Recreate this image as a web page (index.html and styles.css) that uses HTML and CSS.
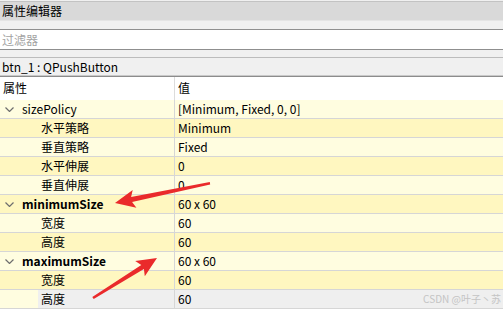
FILE: index.html
```html
<!DOCTYPE html>
<html lang="zh-CN">
<head>
    <meta charset="UTF-8">
    <meta name="viewport" content="width=device-width, initial-scale=1.0">
    <title>属性编辑器</title>
    <link rel="stylesheet" href="styles.css">
</head>
<body>

<div class="editor">
    <div class="titlebar">属性编辑器</div>

    <div class="filter">
        <input type="text" placeholder="过滤器">
    </div>

    <div class="objname">btn_1 : QPushButton</div>

    <div class="tree">
        <div class="row head">
            <div class="name">属性</div>
            <div class="value">值</div>
        </div>

        <div class="row light">
            <div class="name group">
                <svg class="chevron" width="9" height="5" viewBox="0 0 9 5"><polyline points="0.5,0.5 4.5,4.5 8.5,0.5" /></svg>
                sizePolicy
            </div>
            <div class="value">[Minimum, Fixed, 0, 0]</div>
        </div>
        <div class="row dark">
            <div class="name child">水平策略</div>
            <div class="value">Minimum</div>
        </div>
        <div class="row light">
            <div class="name child">垂直策略</div>
            <div class="value">Fixed</div>
        </div>
        <div class="row dark">
            <div class="name child">水平伸展</div>
            <div class="value">0</div>
        </div>
        <div class="row light">
            <div class="name child">垂直伸展</div>
            <div class="value">0</div>
        </div>

        <div class="row dark">
            <div class="name group bold">
                <svg class="chevron" width="9" height="5" viewBox="0 0 9 5"><polyline points="0.5,0.5 4.5,4.5 8.5,0.5" /></svg>
                minimumSize
            </div>
            <div class="value">60 x 60</div>
        </div>
        <div class="row light">
            <div class="name child">宽度</div>
            <div class="value">60</div>
        </div>
        <div class="row dark">
            <div class="name child">高度</div>
            <div class="value">60</div>
        </div>

        <div class="row light">
            <div class="name group bold">
                <svg class="chevron" width="9" height="5" viewBox="0 0 9 5"><polyline points="0.5,0.5 4.5,4.5 8.5,0.5" /></svg>
                maximumSize
            </div>
            <div class="value">60 x 60</div>
        </div>
        <div class="row dark">
            <div class="name child">宽度</div>
            <div class="value">60</div>
        </div>
        <div class="row light selected">
            <div class="name child">高度</div>
            <div class="value">60</div>
        </div>
    </div>

    <!-- red annotation arrows drawn over the tree -->
    <svg class="arrows" width="503" height="309" viewBox="0 0 503 309">
        <polygon points="115,203 132.7,190.1 131.1,197.1 209.8,182 210.2,184.5 132.1,201.9 136.4,207.7" />
        <polygon points="157,258 135.2,261 141.3,264.9 92.3,297 93.7,299 143.9,269.1 144.8,276.2" />
    </svg>

    <div class="watermark">CSDN @叶子丶苏</div>
</div>

</body>
</html>
```

FILE: styles.css
```css
body {
    margin: 0;
    background-color: #f0f0f0;
    font-family: "Noto Sans CJK SC", "Noto Sans", sans-serif;
    font-size: 12px;
    color: #000;
}

.editor {
    position: relative;
    width: 503px;
    height: 309px;
    overflow: hidden;
}

.titlebar {
    margin-top: 1px;
    height: 18px;
    line-height: 18px;
    padding-left: 2px;
    background-color: #d9d9d9;
    border-top: 1px solid #c3c3c3;
    border-bottom: 1px solid #e4e4e4;
}

.filter {
    margin-top: 8px;
    border-top: 1px solid #8f8f8f;
    border-bottom: 1px solid #8f8f8f;
    background-color: #fff;
}

.filter input {
    display: block;
    width: 100%;
    box-sizing: border-box;
    height: 19px;
    padding: 0 2px;
    border: none;
    outline: none;
    font-family: inherit;
    font-size: 12px;
    background: transparent;
}

.filter input::placeholder {
    color: #a3a3a3;
}

.objname {
    margin-top: 7px;
    height: 17px;
    line-height: 17px;
    padding-left: 2px;
    border-top: 1px solid #bcbcbc;
    border-bottom: 1px solid #c9c9c9;
}

.tree {
    border-top: 1px solid #8c8c8c;
    background-color: #fff;
}

.row {
    display: grid;
    grid-template-columns: 175px 1fr;
    height: 18px;
    line-height: 18px;
    border-bottom: 1px solid #d6d6d6;
}

.row.head {
    height: 23px;
    line-height: 22px;
    border-bottom: none;
    background-color: #fff;
}

.row.light {
    background-color: #fffde0;
}

.row.dark {
    background-color: #fff7c0;
}

.name {
    border-right: 1px solid #d6d6d6;
    padding-left: 3px;
    white-space: nowrap;
}

.row.head .name {
    border-right-color: #dcdcdc;
}

.value {
    padding-left: 3px;
    white-space: nowrap;
}

.name.group {
    position: relative;
    padding-left: 22px;
}

.name.child {
    padding-left: 41px;
}

.bold {
    font-weight: bold;
}

.chevron {
    position: absolute;
    left: 5px;
    top: 7px;
}

.chevron polyline {
    fill: none;
    stroke: #6e6e6e;
    stroke-width: 1.2;
}

.row.selected .name {
    background: linear-gradient(to right, #fffde0 38px, #efefef 38px);
}

.row.selected .value {
    background-color: #efefef;
}

.arrows {
    position: absolute;
    left: 0;
    top: 0;
    pointer-events: none;
}

.arrows polygon {
    fill: #ea2a2b;
}

.watermark {
    position: absolute;
    right: 2px;
    top: 291px;
    font-size: 10px;
    color: #c4c4c4;
    white-space: nowrap;
}
```
